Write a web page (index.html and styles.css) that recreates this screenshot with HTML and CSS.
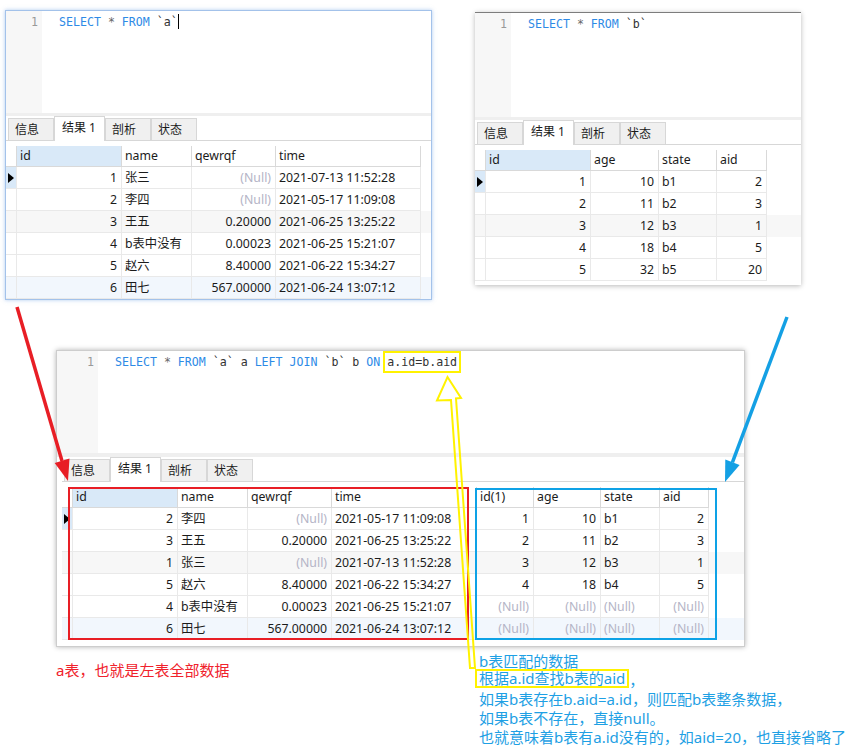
FILE: index.html
```html
<!DOCTYPE html>
<html lang="zh-CN">
<head>
    <meta charset="UTF-8">
    <title>LEFT JOIN</title>
    <link rel="stylesheet" href="styles.css">
</head>
<body>
<div class="canvas">

    <!-- table a -->
    <div class="window window-a">
        <div class="editor">
            <div class="gutter">1</div>
            <div class="code"><span class="kw">SELECT</span> <span class="op">*</span> <span class="kw">FROM</span> `a`<span class="caret"></span></div>
        </div>
        <div class="sep"></div>
        <div class="tabs">
            <div class="tab">信息</div>
            <div class="tab active">结果 1</div>
            <div class="tab">剖析</div>
            <div class="tab">状态</div>
        </div>
        <div class="grid cols-a">
            <div class="row head">
                <div class="cell ind"></div>
                <div class="cell sel">id</div>
                <div class="cell">name</div>
                <div class="cell">qewrqf</div>
                <div class="cell">time</div>
            </div>
            <div class="row">
                <div class="cell ind ptr sel"></div>
                <div class="cell num">1</div>
                <div class="cell">张三</div>
                <div class="cell num null">(Null)</div>
                <div class="cell">2021-07-13 11:52:28</div>
            </div>
            <div class="row">
                <div class="cell ind"></div>
                <div class="cell num">2</div>
                <div class="cell">李四</div>
                <div class="cell num null">(Null)</div>
                <div class="cell">2021-05-17 11:09:08</div>
            </div>
            <div class="row alt">
                <div class="cell ind"></div>
                <div class="cell num">3</div>
                <div class="cell">王五</div>
                <div class="cell num">0.20000</div>
                <div class="cell">2021-06-25 13:25:22</div>
            </div>
            <div class="row">
                <div class="cell ind"></div>
                <div class="cell num">4</div>
                <div class="cell">b表中没有</div>
                <div class="cell num">0.00023</div>
                <div class="cell">2021-06-25 15:21:07</div>
            </div>
            <div class="row">
                <div class="cell ind"></div>
                <div class="cell num">5</div>
                <div class="cell">赵六</div>
                <div class="cell num">8.40000</div>
                <div class="cell">2021-06-22 15:34:27</div>
            </div>
            <div class="row hover">
                <div class="cell ind"></div>
                <div class="cell num">6</div>
                <div class="cell">田七</div>
                <div class="cell num">567.00000</div>
                <div class="cell">2021-06-24 13:07:12</div>
            </div>
        </div>
    </div>

    <!-- table b -->
    <div class="window window-b">
        <div class="editor">
            <div class="gutter">1</div>
            <div class="code"><span class="kw">SELECT</span> <span class="op">*</span> <span class="kw">FROM</span> `b`</div>
        </div>
        <div class="sep"></div>
        <div class="tabs">
            <div class="tab">信息</div>
            <div class="tab active">结果 1</div>
            <div class="tab">剖析</div>
            <div class="tab">状态</div>
        </div>
        <div class="grid cols-b">
            <div class="row head">
                <div class="cell ind"></div>
                <div class="cell sel">id</div>
                <div class="cell">age</div>
                <div class="cell">state</div>
                <div class="cell">aid</div>
            </div>
            <div class="row">
                <div class="cell ind ptr sel"></div>
                <div class="cell num">1</div>
                <div class="cell num">10</div>
                <div class="cell">b1</div>
                <div class="cell num">2</div>
            </div>
            <div class="row">
                <div class="cell ind"></div>
                <div class="cell num">2</div>
                <div class="cell num">11</div>
                <div class="cell">b2</div>
                <div class="cell num">3</div>
            </div>
            <div class="row alt">
                <div class="cell ind"></div>
                <div class="cell num">3</div>
                <div class="cell num">12</div>
                <div class="cell">b3</div>
                <div class="cell num">1</div>
            </div>
            <div class="row">
                <div class="cell ind"></div>
                <div class="cell num">4</div>
                <div class="cell num">18</div>
                <div class="cell">b4</div>
                <div class="cell num">5</div>
            </div>
            <div class="row">
                <div class="cell ind"></div>
                <div class="cell num">5</div>
                <div class="cell num">32</div>
                <div class="cell">b5</div>
                <div class="cell num">20</div>
            </div>
        </div>
    </div>

    <!-- a LEFT JOIN b -->
    <div class="window window-c">
        <div class="editor">
            <div class="gutter">1</div>
            <div class="code"><span class="kw">SELECT</span> <span class="op">*</span> <span class="kw">FROM</span> `a` a <span class="kw">LEFT JOIN</span> `b` b <span class="kw">ON</span> <span class="match">a.id=b.aid</span></div>
        </div>
        <div class="sep"></div>
        <div class="tabs">
            <div class="tab">信息</div>
            <div class="tab active">结果 1</div>
            <div class="tab">剖析</div>
            <div class="tab">状态</div>
        </div>
        <div class="grid cols-c">
            <div class="row head">
                <div class="cell ind"></div>
                <div class="cell sel">id</div>
                <div class="cell">name</div>
                <div class="cell">qewrqf</div>
                <div class="cell">time</div>
                <div class="cell">id(1)</div>
                <div class="cell">age</div>
                <div class="cell">state</div>
                <div class="cell">aid</div>
            </div>
            <div class="row">
                <div class="cell ind ptr sel"></div>
                <div class="cell num">2</div>
                <div class="cell">李四</div>
                <div class="cell num null">(Null)</div>
                <div class="cell">2021-05-17 11:09:08</div>
                <div class="cell num">1</div>
                <div class="cell num">10</div>
                <div class="cell">b1</div>
                <div class="cell num">2</div>
            </div>
            <div class="row">
                <div class="cell ind"></div>
                <div class="cell num">3</div>
                <div class="cell">王五</div>
                <div class="cell num">0.20000</div>
                <div class="cell">2021-06-25 13:25:22</div>
                <div class="cell num">2</div>
                <div class="cell num">11</div>
                <div class="cell">b2</div>
                <div class="cell num">3</div>
            </div>
            <div class="row alt">
                <div class="cell ind"></div>
                <div class="cell num">1</div>
                <div class="cell">张三</div>
                <div class="cell num null">(Null)</div>
                <div class="cell">2021-07-13 11:52:28</div>
                <div class="cell num">3</div>
                <div class="cell num">12</div>
                <div class="cell">b3</div>
                <div class="cell num">1</div>
            </div>
            <div class="row">
                <div class="cell ind"></div>
                <div class="cell num">5</div>
                <div class="cell">赵六</div>
                <div class="cell num">8.40000</div>
                <div class="cell">2021-06-22 15:34:27</div>
                <div class="cell num">4</div>
                <div class="cell num">18</div>
                <div class="cell">b4</div>
                <div class="cell num">5</div>
            </div>
            <div class="row">
                <div class="cell ind"></div>
                <div class="cell num">4</div>
                <div class="cell">b表中没有</div>
                <div class="cell num">0.00023</div>
                <div class="cell">2021-06-25 15:21:07</div>
                <div class="cell num null">(Null)</div>
                <div class="cell num null">(Null)</div>
                <div class="cell null">(Null)</div>
                <div class="cell num null">(Null)</div>
            </div>
            <div class="row hover">
                <div class="cell ind"></div>
                <div class="cell num">6</div>
                <div class="cell">田七</div>
                <div class="cell num">567.00000</div>
                <div class="cell">2021-06-24 13:07:12</div>
                <div class="cell num null">(Null)</div>
                <div class="cell num null">(Null)</div>
                <div class="cell null">(Null)</div>
                <div class="cell num null">(Null)</div>
            </div>
        </div>
    </div>

    <p class="note note-a">a表，也就是左表全部数据</p>

    <div class="note note-b">
        <p>b表匹配的数据</p>
        <p><span class="boxed">根据a.id查找b表的aid</span><span class="tail">，</span></p>
        <p>如果b表存在b.aid=a.id，则匹配b表整条数据，</p>
        <p>如果b表不存在，直接null。</p>
        <p>也就意味着b表有a.id没有的，如aid=20，也直接省略了</p>
    </div>

    <!-- annotation marks drawn over the screenshots -->
    <svg class="marks" width="866" height="752" viewBox="0 0 866 752">
        <rect x="69" y="488" width="399" height="151" fill="none" stroke="#e81e25" stroke-width="2"/>
        <rect x="476" y="489" width="240" height="150" fill="none" stroke="#0ea2e6" stroke-width="2"/>
        <line x1="17" y1="307" x2="62" y2="461" stroke="#e81e25" stroke-width="3.5"/>
        <polygon points="68,481 69.5,458.5 54.7,463" fill="#e81e25"/>
        <line x1="787" y1="317" x2="732.4" y2="462.3" stroke="#14a0e4" stroke-width="3.5"/>
        <polygon points="725,482 739.6,465 725.3,459.6" fill="#14a0e4"/>
        <polygon points="447.5,377 461,398 456,398.5 475,668 470,668 451,400 437,400.5" fill="none" stroke="#fff200" stroke-width="2"/>
    </svg>
</div>
</body>
</html>
```
FILE: styles.css
```css
* {
    margin: 0;
    padding: 0;
    box-sizing: border-box;
}

body {
    background: #fff;
    font-family: "Noto Sans", "Noto Sans CJK SC", sans-serif;
    font-size: 12px;
    color: #1b1b1b;
}

.canvas {
    position: relative;
    width: 866px;
    height: 752px;
    overflow: hidden;
    background: #fff;
}

/* screenshot windows */
.window {
    position: absolute;
    display: flex;
    flex-direction: column;
    background: #fff;
}

.window-a {
    left: 5px;
    top: 10px;
    width: 427px;
    height: 290px;
    border: 1px solid #a3c2ea;
    box-shadow: 0 0 4px rgba(110,160,225,0.55);
}

.window-b {
    left: 475px;
    top: 12px;
    width: 326px;
    height: 273px;
    border-top: 1px solid #7d7d7d;
    box-shadow: 0 1px 5px rgba(0,0,0,0.28);
}

.window-c {
    left: 56px;
    top: 350px;
    width: 689px;
    height: 297px;
    padding-left: 5px;
    border: 1px solid #cdcdcd;
    box-shadow: 0 0 5px rgba(0,0,0,0.3);
}

/* sql editor */
.editor {
    display: flex;
    height: 102px;
    font-family: "DejaVu Sans Mono", monospace;
    font-size: 11.6px;
    line-height: 18px;
}

.window-b .editor {
    height: 104px;
}

.window-c .editor,
.window-c .sep {
    margin-left: -5px;
}

.gutter {
    width: 36px;
    padding: 2px 4px 0 0;
    background: #f7f7f7;
    color: #999;
    text-align: right;
}

.window-c .gutter {
    width: 41px;
}

.code {
    flex: 1;
    padding: 2px 0 0 17px;
    color: #333;
    white-space: pre;
}

.kw {
    color: #2d8ae6;
}

.op {
    color: #666;
}

.caret {
    display: inline-block;
    width: 0;
    height: 15px;
    border-left: 1px solid #000;
    vertical-align: -3px;
}

.match {
    outline: 2px solid #fff200;
    outline-offset: 2px;
}

.sep {
    height: 3px;
    background: #efefef;
}

.window-c .sep {
    height: 4px;
}

/* result tabs */
.tabs {
    display: flex;
    align-items: flex-end;
    height: 25px;
    padding-left: 2px;
    border-bottom: 1px solid #d7d7d7;
}

.tab {
    width: 46px;
    height: 22px;
    padding-left: 6px;
    line-height: 21px;
    background: #f0f0f0;
    border: 1px solid #d7d7d7;
    border-bottom: none;
}

.tab.active {
    width: 51px;
    height: 25px;
    margin-bottom: -1px;
    padding-left: 7px;
    background: #fff;
}

/* data grid */
.grid {
    margin-top: 5px;
}

.row {
    display: grid;
    height: 22px;
}

.row.head {
    height: 21px;
}

.cols-a .row {
    grid-template-columns: 11px 105px 70px 84px 145px;
}

.cols-b .row {
    grid-template-columns: 11px 105px 68px 58px 50px;
}

.cols-c .row {
    grid-template-columns: 11px 105px 70px 84px 145px 57px 67px 59px 49px;
}

.cell {
    padding: 0 4px 0 3px;
    font-size: 12.3px;
    line-height: 21px;
    white-space: nowrap;
    overflow: hidden;
    border-right: 1px solid #e9e9e9;
    border-bottom: 1px solid #e9e9e9;
}

.head .cell {
    line-height: 20px;
    border-color: #d9d9d9;
}

.num {
    text-align: right;
}

.null {
    color: #b4b4c6;
}

.sel {
    background: #d9e9f8;
}

.row.alt {
    background: #f7f7f7;
}

.row.hover {
    background: #f2f7fd;
}

.ind {
    padding: 0;
}

.ptr {
    display: flex;
    align-items: center;
    justify-content: center;
}

.ptr::before {
    content: "";
    border-left: 6px solid #000;
    border-top: 5px solid transparent;
    border-bottom: 5px solid transparent;
}

/* hand-written notes */
.note {
    position: absolute;
    font-family: "Noto Sans", "Noto Sans CJK SC", sans-serif;
    font-size: 15px;
    line-height: 19px;
    white-space: nowrap;
}

.note-a {
    left: 56px;
    top: 661px;
    color: #f0222c;
}

.note-b {
    left: 479px;
    top: 652px;
    color: #1ea0e4;
}

.boxed {
    display: inline-block;
    margin-left: -2px;
    padding: 0 2px;
    line-height: 15px;
    vertical-align: 2px;
    outline: 2px solid #fff200;
}

.tail {
    margin-left: 2px;
}

.marks {
    position: absolute;
    left: 0;
    top: 0;
    pointer-events: none;
}
```
